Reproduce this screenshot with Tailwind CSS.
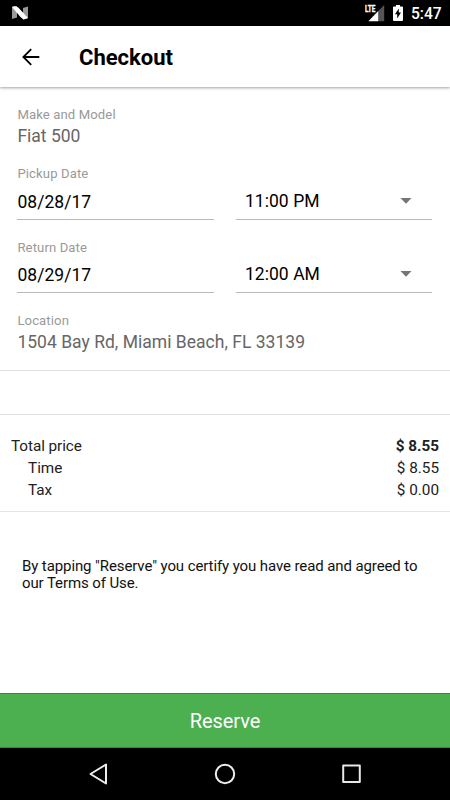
<!DOCTYPE html>
<html lang="en">
<head>
<meta charset="utf-8">
<title>Checkout</title>
<script src="https://cdn.jsdelivr.net/npm/@tailwindcss/browser@4"></script>
</head>
<body class="bg-white">
<div class="flex h-[800px] w-[450px] flex-col overflow-hidden bg-white font-[Roboto,sans-serif] text-black">
  <!-- Status bar -->
  <div class="flex h-[26px] shrink-0 items-center justify-between bg-black pr-[9px] pl-[12px]">
    <svg class="h-[14px] w-[16px]" viewBox="0 0 16 14">
      <path fill="#999" d="M0 1L5 0V11.5L0 13ZM11 2L16 .5V12L11 14Z"/>
      <path fill="#fff" d="M0 1Q1 .2 4 .4Q5.5.6 6.5 1.8L16 12Q13 13.5 10.5 12.7L8.5 11Z"/>
    </svg>
    <div class="flex items-center">
      <svg class="h-[18px] w-[20px]" viewBox="0 0 20 18">
        <path fill="#555" d="M19.2 1V17.2H13V7.2Z"/>
        <path fill="#fff" d="M13.2 7V17.2H3.4Z"/>
        <text x="0" y="8.4" fill="#fff" stroke="#fff" stroke-width=".35" font-family="Roboto, sans-serif" font-size="9.4" font-weight="700" textLength="10.5" lengthAdjust="spacingAndGlyphs">LTE</text>
      </svg>
      <svg class="ml-[8px] h-[16px] w-[10px]" viewBox="0 0 10 16">
        <path fill="#fff" d="M3 0H7V1.4H9Q10 1.4 10 2.4V15Q10 16 9 16H1Q0 16 0 15V2.4Q0 1.4 1 1.4H3Z"/>
        <path fill="#000" d="M5.8 3.6L2 9.3H4.2V13.5L8 7.6H5.8Z"/>
      </svg>
      <span class="ml-[8px] w-[30px] pt-[2px] text-[15.6px] leading-[20px] font-medium whitespace-nowrap text-white">5:47</span>
    </div>
  </div>
  <!-- App bar -->
  <header class="relative flex h-[61px] shrink-0 items-center bg-white pt-[2px] pl-[22px] shadow-[0_1px_2px_rgba(0,0,0,0.28),0_2px_4px_rgba(0,0,0,0.08)]">
    <svg class="mb-[2px] h-[18px] w-[18px]" viewBox="0 0 18 18" fill="none" stroke="#000" stroke-width="1.8"><path d="M17.3 9H1.5M9.2 1.2L1.4 9L9.2 16.8"/></svg>
    <h1 class="ml-[39px] text-[22px] leading-[28px] font-bold">Checkout</h1>
  </header>
  <!-- Rental details -->
  <section class="h-[284px] shrink-0 border-b border-[#e0e0e0] pt-[19px] pr-[17.6px] pl-[17.4px]">
    <div class="text-[13.1px] leading-[18px] tracking-[0.12px] text-[#999]">Make and Model</div>
    <div class="text-[17.5px] leading-[24px] text-[#666]">Fiat 500</div>
    <div class="mt-[17px] text-[13.1px] leading-[18px] tracking-[0.12px] text-[#999]">Pickup Date</div>
    <div class="flex justify-between">
      <div class="h-[37px] w-[196.5px] border-b border-[#b9b9b9] pt-[6px] text-[17.5px] leading-[26px] tracking-[0.05px]">08/28/17</div>
      <div class="flex h-[37px] w-[196.5px] items-start justify-between border-b border-[#b9b9b9] pt-[5px] pr-[20px] pl-[9px] text-[17.5px] leading-[26px] tracking-[0.05px]">
        <span>11:00 PM</span>
        <svg class="mt-[10px] h-[6px] w-[12px]" viewBox="0 0 12 6"><path fill="#757575" d="M.5 0H11.5L6 5.7Z"/></svg>
      </div>
    </div>
    <div class="mt-[19px] text-[13.1px] leading-[18px] tracking-[0.12px] text-[#999]">Return Date</div>
    <div class="flex justify-between">
      <div class="h-[36px] w-[196.5px] border-b border-[#b9b9b9] pt-[5px] text-[17.5px] leading-[26px] tracking-[0.05px]">08/29/17</div>
      <div class="flex h-[36px] w-[196.5px] items-start justify-between border-b border-[#b9b9b9] pt-[4px] pr-[20px] pl-[9px] text-[17.5px] leading-[26px] tracking-[0.05px]">
        <span>12:00 AM</span>
        <svg class="mt-[10px] h-[6px] w-[12px]" viewBox="0 0 12 6"><path fill="#757575" d="M.5 0H11.5L6 5.7Z"/></svg>
      </div>
    </div>
    <div class="mt-[19px] text-[13.1px] leading-[18px] tracking-[0.12px] text-[#999]">Location</div>
    <div class="text-[17.5px] leading-[24px] tracking-[0.02px] text-[#666]">1504 Bay Rd, Miami Beach, FL 33139</div>
  </section>
  <div class="h-[44px] shrink-0 border-b border-[#e0e0e0]"></div>
  <!-- Price summary -->
  <section class="h-[97px] shrink-0 border-b border-[#e5e5e5] pt-[20px] pr-[11px] pl-[11px] text-[15.3px] leading-[22px] text-[#212121]">
    <div class="flex justify-between"><span class="tracking-[-0.07px]">Total price</span><span class="font-bold">$ 8.55</span></div>
    <div class="flex justify-between pl-[17px]"><span>Time</span><span>$ 8.55</span></div>
    <div class="flex justify-between pl-[17px]"><span>Tax</span><span>$ 0.00</span></div>
  </section>
  <p class="pt-[46px] pl-[22px] text-[15px] leading-[17px] tracking-[-0.1px] whitespace-nowrap text-[#111]">By tapping "Reserve" you certify you have read and agreed to<br>our Terms of Use.</p>
  <button class="mt-auto h-[55px] shrink-0 border-t border-b border-t-[#2b9030] border-b-[#3b853e] bg-[#4caf50] text-[20px] tracking-[-0.05px] text-white">Reserve</button>
  <!-- Navigation bar -->
  <nav class="flex h-[52px] shrink-0 items-center justify-between bg-black pr-[88px] pl-[88px]">
    <svg class="h-[22px] w-[20px]" viewBox="0 0 20 22" fill="none" stroke="#eee" stroke-width="2" stroke-linejoin="round"><path d="M18 1.5V20.5L2.5 11Z"/></svg>
    <svg class="h-[22px] w-[22px]" viewBox="0 0 22 22" fill="none" stroke="#eee" stroke-width="2"><circle cx="11" cy="11" r="9.2"/></svg>
    <svg class="h-[20px] w-[20px]" viewBox="0 0 20 20" fill="none" stroke="#e8e8e8" stroke-width="2" stroke-linejoin="round"><rect x="1.2" y="1.5" width="16.6" height="16.6"/></svg>
  </nav>
</div>
</body>
</html>
